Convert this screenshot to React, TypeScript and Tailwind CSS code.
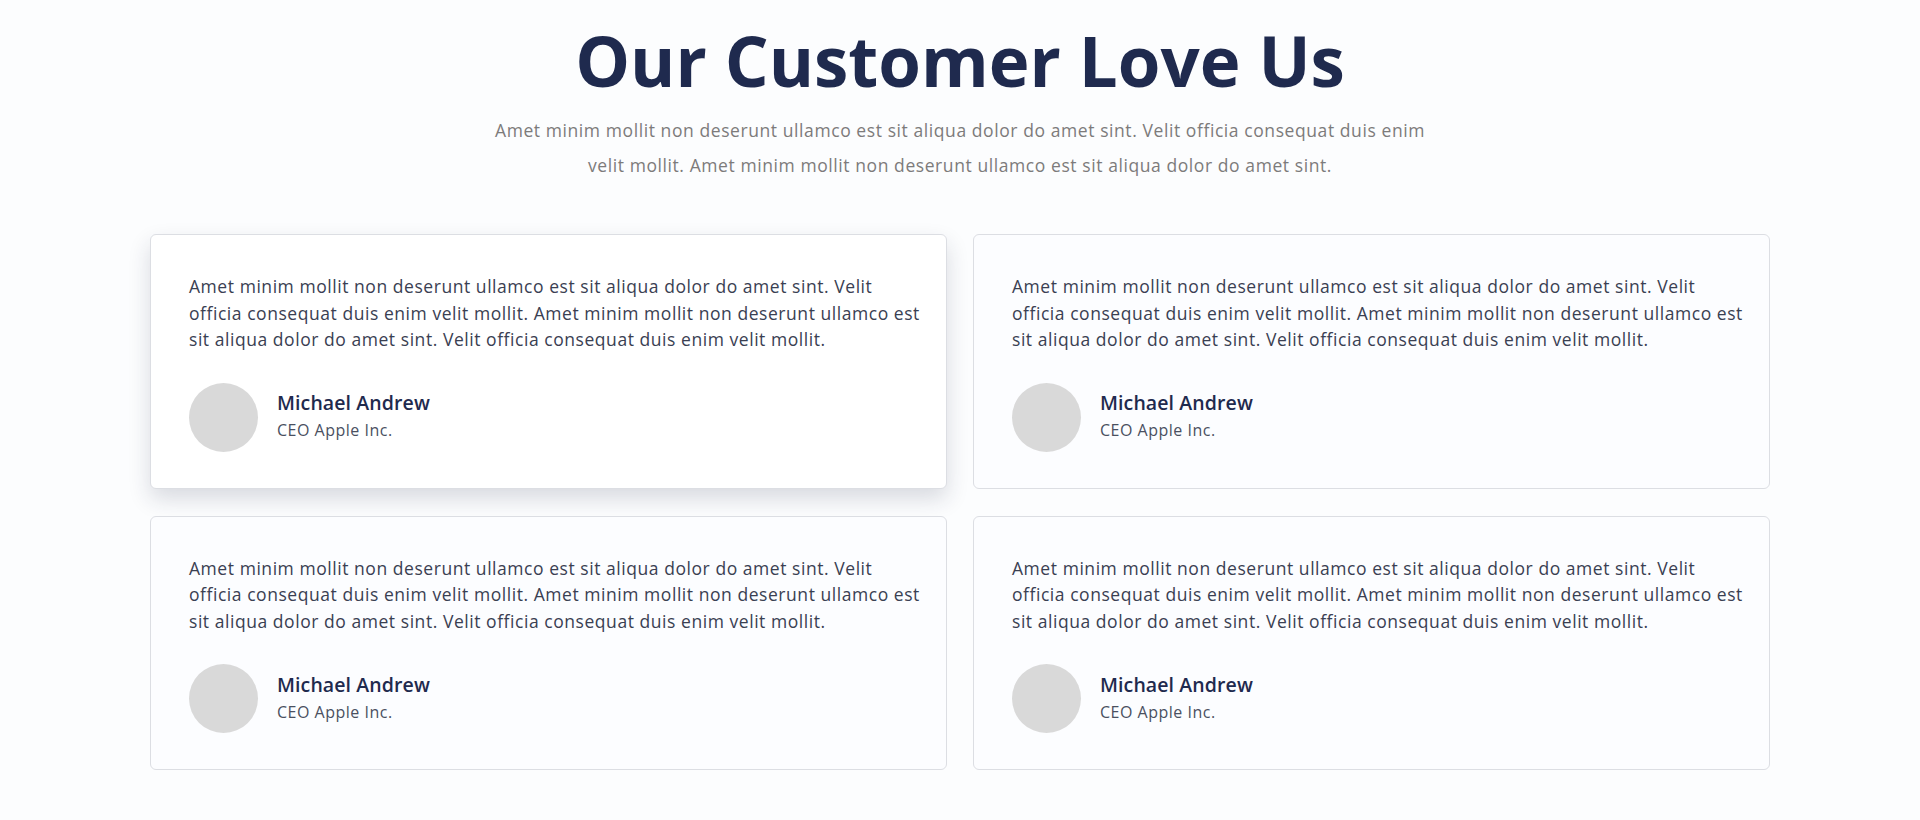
const QUOTE_LINES = [
    "Amet minim mollit non deserunt ullamco est sit aliqua dolor do amet sint. Velit",
    "officia consequat duis enim velit mollit. Amet minim mollit non deserunt ullamco est",
    "sit aliqua dolor do amet sint. Velit officia consequat duis enim velit mollit.",
];

const testimonials = [
    { id: 1, name: "Michael Andrew", role: "CEO Apple Inc.", active: true },
    { id: 2, name: "Michael Andrew", role: "CEO Apple Inc.", active: false },
    { id: 3, name: "Michael Andrew", role: "CEO Apple Inc.", active: false },
    { id: 4, name: "Michael Andrew", role: "CEO Apple Inc.", active: false },
];

type TestimonialCardProps = {
    name: string;
    role: string;
    active: boolean;
};

const TestimonialCard = ({ name, role, active }: TestimonialCardProps) => {
    return (
        <div
            className={
                active
                    ? "rounded-[6px] border border-[#dcdee3] bg-white pb-[36px] pl-[38px] pr-[20px] pt-[38px] shadow-[0_10px_22px_rgba(30,40,70,0.16)]"
                    : "rounded-[6px] border border-[#dcdee3] bg-[#fcfdff] pb-[36px] pl-[38px] pr-[20px] pt-[38px]"
            }
        >
            <p className="text-[17.5px] leading-[26.5px] tracking-[0.55px] text-[#3a4052]">
                {QUOTE_LINES.map((line) => (
                    <span key={line} className="block whitespace-nowrap">
                        {line}
                    </span>
                ))}
            </p>

            <div className="mt-[30px] flex items-center gap-[19px]">
                <div className="h-[69px] w-[69px] shrink-0 rounded-full bg-[#d9d9d9]" />
                <div className="-mt-[3px]">
                    <h3 className="text-[19.5px] font-semibold leading-[26px] tracking-[0.1px] text-[#1f2a4e]">
                        {name}
                    </h3>
                    <p className="mt-[3px] text-[16px] leading-[22px] tracking-[0.5px] text-[#4a5061]">
                        {role}
                    </p>
                </div>
            </div>
        </div>
    );
};

const App = () => {
    return (
        <div className="min-h-screen bg-[#fcfdfe] pt-[18px] font-['Open_Sans',sans-serif]">
            <h1 className="text-center text-[69px] font-bold leading-[84px] text-[#1f2a4e]">
                Our Customer Love Us
            </h1>

            <p className="mx-auto mt-[11px] text-center text-[17.5px] leading-[35px] tracking-[0.58px] text-[#7d7b7b]">
                <span className="block">
                    Amet minim mollit non deserunt ullamco est sit aliqua dolor do amet sint. Velit officia consequat duis enim
                </span>
                <span className="block">
                    velit mollit. Amet minim mollit non deserunt ullamco est sit aliqua dolor do amet sint.
                </span>
            </p>

            <div className="mx-auto mt-[51px] grid w-[1620px] grid-cols-2 gap-x-[26px] gap-y-[27px]">
                {testimonials.map((item) => (
                    <TestimonialCard
                        key={item.id}
                        name={item.name}
                        role={item.role}
                        active={item.active}
                    />
                ))}
            </div>
        </div>
    );
};

export default App;
